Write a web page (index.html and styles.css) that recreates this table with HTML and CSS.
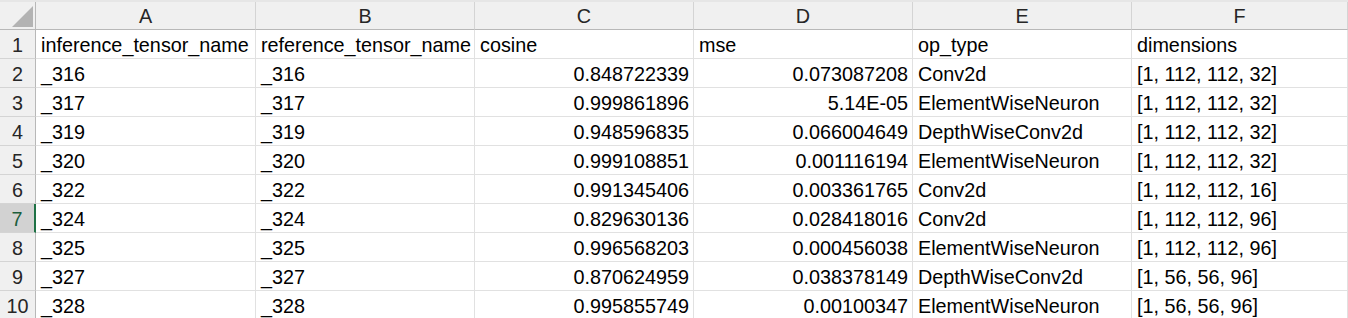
FILE: index.html
```html
<!DOCTYPE html>
<html lang="en">

<head>
    <meta charset="UTF-8">
    <title>tensor_compare.xlsx</title>
    <link rel="stylesheet" href="styles.css">
</head>

<body>
    <div class="topstrip"></div>
    <section class="sheet">
        <div class="colhead corner"><span class="selectall"></span></div>
        <div class="colhead">A</div>
        <div class="colhead">B</div>
        <div class="colhead">C</div>
        <div class="colhead">D</div>
        <div class="colhead">E</div>
        <div class="colhead">F</div>

        <div class="rowhead">1</div>
        <div class="cell">inference_tensor_name</div>
        <div class="cell">reference_tensor_name</div>
        <div class="cell">cosine</div>
        <div class="cell">mse</div>
        <div class="cell">op_type</div>
        <div class="cell">dimensions</div>

        <div class="rowhead">2</div>
        <div class="cell">_316</div>
        <div class="cell">_316</div>
        <div class="cell num">0.848722339</div>
        <div class="cell num">0.073087208</div>
        <div class="cell">Conv2d</div>
        <div class="cell">[1, 112, 112, 32]</div>

        <div class="rowhead">3</div>
        <div class="cell">_317</div>
        <div class="cell">_317</div>
        <div class="cell num">0.999861896</div>
        <div class="cell num">5.14E-05</div>
        <div class="cell">ElementWiseNeuron</div>
        <div class="cell">[1, 112, 112, 32]</div>

        <div class="rowhead">4</div>
        <div class="cell">_319</div>
        <div class="cell">_319</div>
        <div class="cell num">0.948596835</div>
        <div class="cell num">0.066004649</div>
        <div class="cell">DepthWiseConv2d</div>
        <div class="cell">[1, 112, 112, 32]</div>

        <div class="rowhead">5</div>
        <div class="cell">_320</div>
        <div class="cell">_320</div>
        <div class="cell num">0.999108851</div>
        <div class="cell num">0.001116194</div>
        <div class="cell">ElementWiseNeuron</div>
        <div class="cell">[1, 112, 112, 32]</div>

        <div class="rowhead">6</div>
        <div class="cell">_322</div>
        <div class="cell">_322</div>
        <div class="cell num">0.991345406</div>
        <div class="cell num">0.003361765</div>
        <div class="cell">Conv2d</div>
        <div class="cell">[1, 112, 112, 16]</div>

        <div class="rowhead active">7</div>
        <div class="cell">_324</div>
        <div class="cell">_324</div>
        <div class="cell num">0.829630136</div>
        <div class="cell num">0.028418016</div>
        <div class="cell">Conv2d</div>
        <div class="cell">[1, 112, 112, 96]</div>

        <div class="rowhead">8</div>
        <div class="cell">_325</div>
        <div class="cell">_325</div>
        <div class="cell num">0.996568203</div>
        <div class="cell num">0.000456038</div>
        <div class="cell">ElementWiseNeuron</div>
        <div class="cell">[1, 112, 112, 96]</div>

        <div class="rowhead">9</div>
        <div class="cell">_327</div>
        <div class="cell">_327</div>
        <div class="cell num">0.870624959</div>
        <div class="cell num">0.038378149</div>
        <div class="cell">DepthWiseConv2d</div>
        <div class="cell">[1, 56, 56, 96]</div>

        <div class="rowhead">10</div>
        <div class="cell">_328</div>
        <div class="cell">_328</div>
        <div class="cell num">0.995855749</div>
        <div class="cell num">0.00100347</div>
        <div class="cell">ElementWiseNeuron</div>
        <div class="cell">[1, 56, 56, 96]</div>
    </section>
</body>

</html>
```

FILE: styles.css
```css
body {
    margin: 0;
    background-color: #fff;
    font-family: 'Liberation Sans', Arial, sans-serif;
    font-size: 19.8px;
    color: #000;
    overflow: hidden;
}

.topstrip {
    height: 2px;
    background-color: #e6e6e6;
}

.sheet {
    display: grid;
    grid-template-columns: 36px 220px 219px 219px 219px 219px 1fr;
    grid-template-rows: 28px;
    grid-auto-rows: 29px;
}

.colhead,
.rowhead,
.cell {
    box-sizing: border-box;
    white-space: nowrap;
    overflow: hidden;
}

.colhead {
    display: flex;
    justify-content: center;
    align-items: center;
    padding-top: 2px;
    background-color: #f0f0f0;
    color: #262626;
    border-right: 1px solid #d4d4d4;
    border-bottom: 1px solid #b8b8b8;
}

.corner {
    justify-content: flex-end;
    align-items: flex-end;
    padding: 0 2px 2px 0;
    border-right-color: #b8b8b8;
}

.selectall {
    width: 21px;
    height: 21px;
    background-color: #b3b3b3;
    clip-path: polygon(100% 0, 100% 100%, 0 100%);
}

.rowhead {
    text-align: center;
    line-height: 29px;
    padding-top: 1px;
    background-color: #f0f0f0;
    color: #262626;
    border-right: 1px solid #b8b8b8;
    border-bottom: 1px solid #d4d4d4;
}

.rowhead.active {
    background-color: #d2d2d2;
    color: #1c5e3c;
    border-right: 2px solid #1e7145;
}

.cell {
    line-height: 29px;
    padding: 1px 4px 0 5px;
    border-right: 1px solid #e1e1e1;
    border-bottom: 1px solid #e1e1e1;
}

.num {
    text-align: right;
}
```
